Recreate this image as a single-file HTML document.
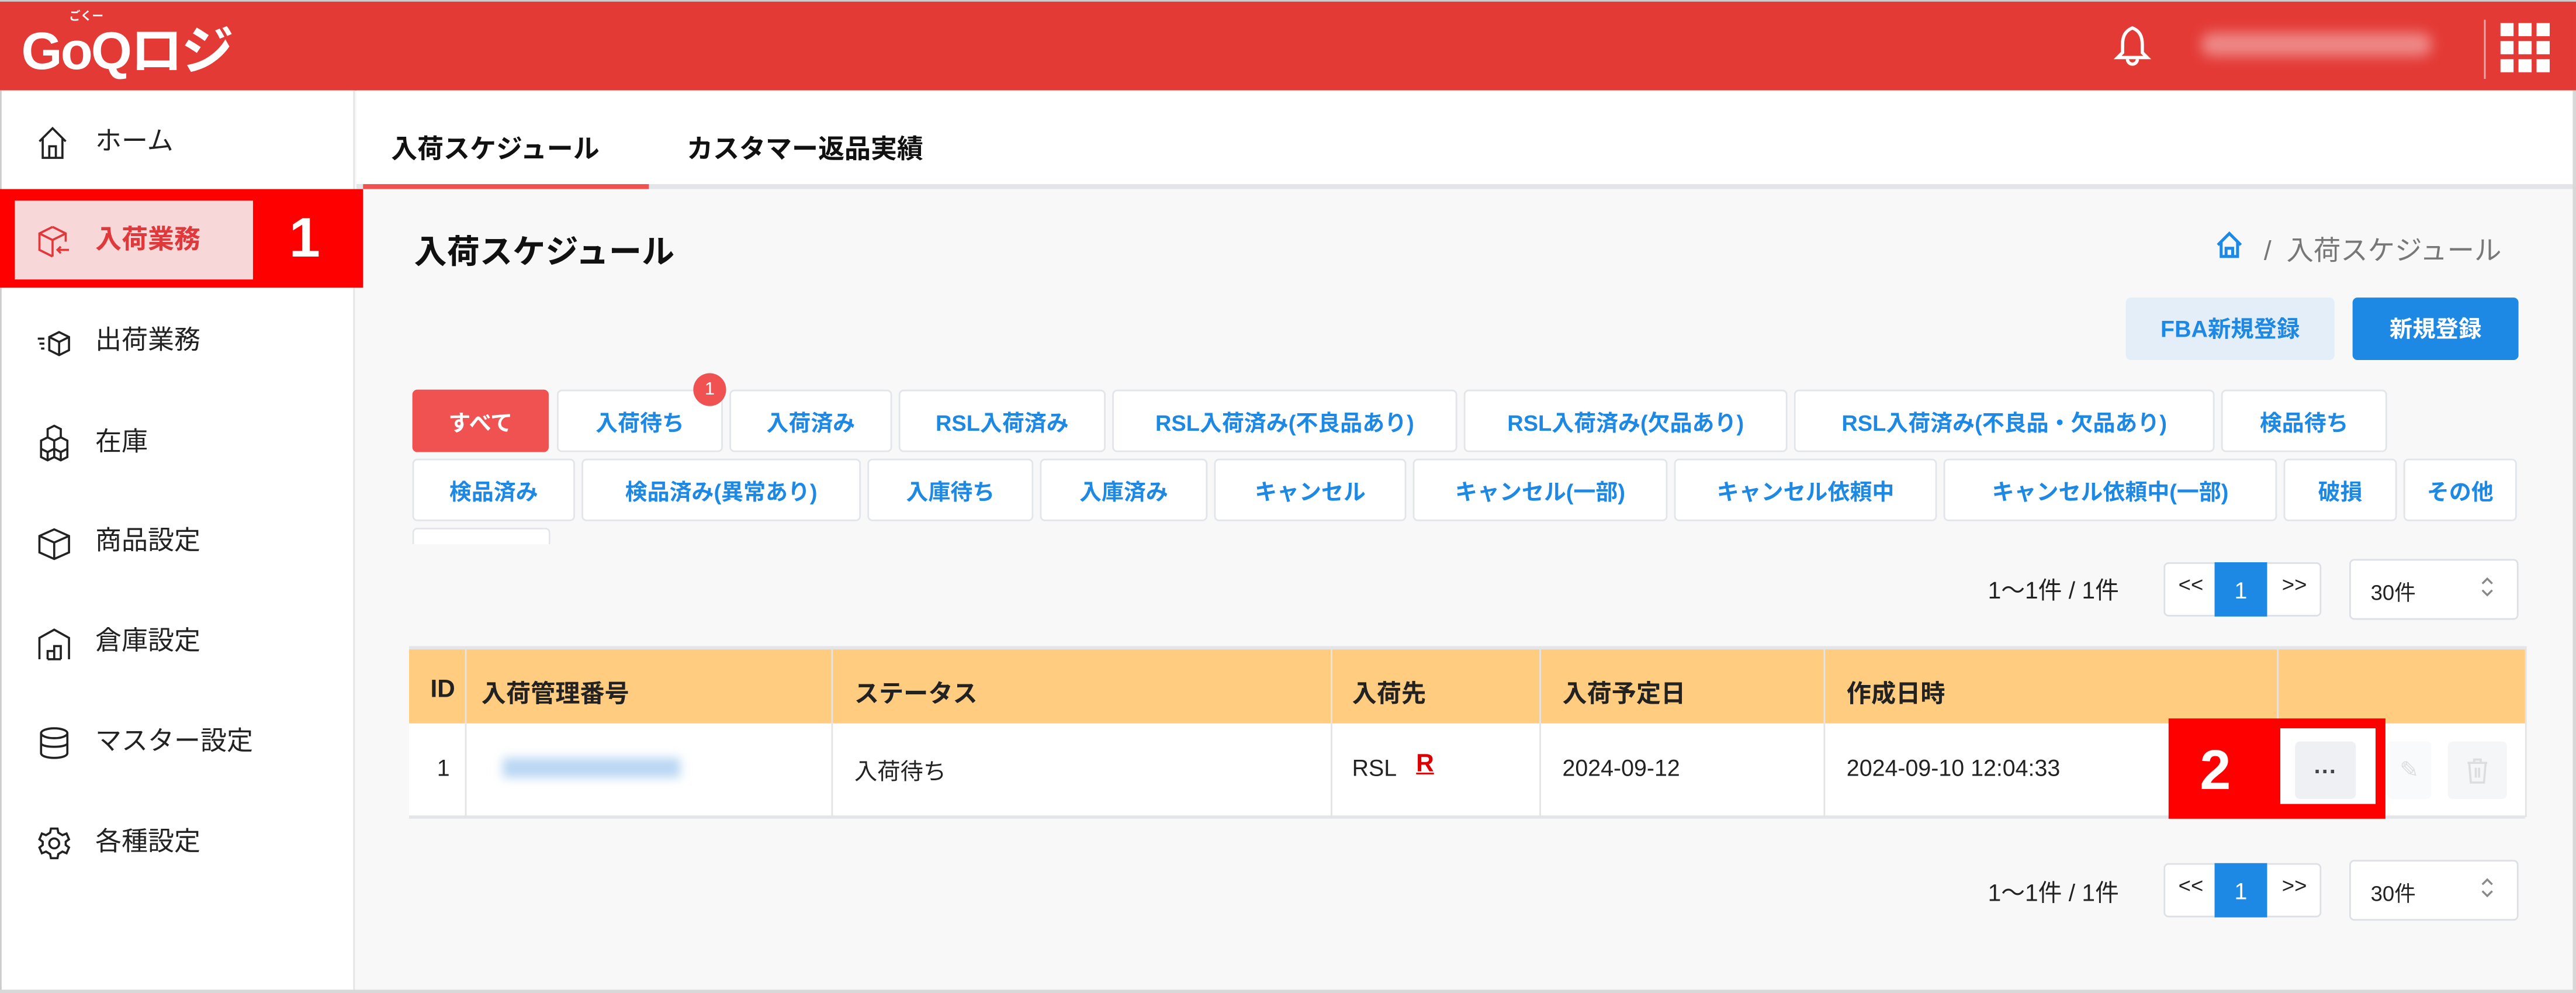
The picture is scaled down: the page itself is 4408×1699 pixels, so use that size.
<!DOCTYPE html>
<html><head><meta charset="utf-8">
<style>
html,body{margin:0;padding:0;width:4408px;height:1699px;overflow:hidden;background:#fff}
#s{position:absolute;left:0;top:0;width:1568px;height:604px;transform:scale(2.81122,2.81291);transform-origin:0 0;font-family:"Liberation Sans","Noto Sans CJK JP",sans-serif;background:#f8f8f8;overflow:hidden}
.a{position:absolute}
.c{position:absolute;display:flex;align-items:center;justify-content:center;box-sizing:border-box}
.ft{background:#fff;border:1px solid #e2e5ea;border-radius:3px;color:#1e88e5;font-size:13.5px;font-weight:bold;height:38px}
.nav{position:absolute;left:58px;font-size:16px;color:#222;line-height:20px}
.ic{position:absolute;left:22px}
.th{position:absolute;top:411px;font-size:15px;font-weight:bold;color:#222}
.td{position:absolute;top:459px;font-size:14px;color:#222}
.vl{position:absolute;width:1px;background:#e4e4e4;top:393px;height:104px}
</style></head><body>
<div id="s">
<!-- header -->
<div class="a" style="left:0;top:0;width:1568px;height:55px;background:#e43a36;border-top:1px solid #ccc;box-sizing:border-box"></div>
<div class="a" style="left:13px;top:11px;color:#fff;font-weight:bold;font-size:32px;letter-spacing:-1px;line-height:40px">GoQロジ</div>
<div class="a" style="left:42px;top:5px;color:#fff;font-size:7px;font-weight:bold">ごくー</div>
<svg class="a" style="left:1286px;top:14px" width="24" height="28" viewBox="0 0 24 28"><path d="M12 3 C7 5 6 9 6 13 L6 18 L3 21 L21 21 L18 18 L18 13 C18 9 17 5 12 3Z" fill="none" stroke="#fff" stroke-width="2"/><path d="M9 22 a3 3 0 0 0 6 0" fill="none" stroke="#fff" stroke-width="2"/></svg>
<div class="a" style="left:1340px;top:20px;width:140px;height:14px;background:#ee8a88;filter:blur(4px);border-radius:6px"></div>
<div class="a" style="left:1512px;top:12px;width:1px;height:36px;background:#f2aaa8"></div>
<svg class="a" style="left:1522px;top:14px" width="30" height="30" viewBox="0 0 30 30" fill="#fff"><rect x="0" y="0" width="8" height="8"/><rect x="11" y="0" width="8" height="8"/><rect x="22" y="0" width="8" height="8"/><rect x="0" y="11" width="8" height="8"/><rect x="11" y="11" width="8" height="8"/><rect x="22" y="11" width="8" height="8"/><rect x="0" y="22" width="8" height="8"/><rect x="11" y="22" width="8" height="8"/><rect x="22" y="22" width="8" height="8"/></svg>
<!-- sidebar -->
<div class="a" style="left:0;top:55px;width:216px;height:549px;background:#fff;border-right:1px solid #e4e4e4;border-left:1px solid #ccc;box-sizing:border-box"></div>
<svg class="ic" style="top:76px" width="20" height="22" viewBox="0 0 20 22" fill="none" stroke="#222" stroke-width="1.3"><path d="M2 10 L10 2 L18 10 M4 8 V20 H16 V8 M8 20 V13 H12 V20"/></svg>
<div class="nav" style="top:77px">ホーム</div>
<div class="a" style="left:0;top:115px;width:221px;height:60px;background:#ff0000"></div>
<div class="a" style="left:9px;top:122px;width:145px;height:48px;background:#f8d7d8"></div>
<svg class="ic" style="top:136px" width="22" height="22" viewBox="0 0 22 22" fill="none" stroke="#e0393c" stroke-width="1.3"><path d="M10 2 L18 6 V11 M10 2 L2 6 V16 L10 20 M2 6 L10 10 L18 6 M10 10 V20 M20 16 H13 M15 14 L13 16 L15 18"/></svg>
<div class="nav" style="top:137px;color:#e0393c;font-weight:bold">入荷業務</div>
<div class="a" style="left:176px;top:122px;color:#fff;font-size:34px;font-weight:bold;line-height:46px">1</div>
<svg class="ic" style="top:199px" width="22" height="20" viewBox="0 0 22 20" fill="none" stroke="#222" stroke-width="1.3"><path d="M1 7 H5 M2 10 H5 M3 13 H5 M14 3 L20 6 V14 L14 17 L8 14 V6 Z M8 6 L14 9 L20 6 M14 9 V17"/></svg>
<div class="nav" style="top:198px">出荷業務</div>
<svg class="ic" style="top:258px" width="22" height="24" viewBox="0 0 22 24" fill="none" stroke="#222" stroke-width="1.3"><path d="M11 1 L15 3 V8 L11 10 L7 8 V3 Z M7 8 L3 10 V15 L7 17 L11 15 V10 M15 8 L19 10 V15 L15 17 L11 15 M3 15 V20 L7 22 L11 20 L15 22 L19 20 V15 M7 17 V22 M15 17 V22 M11 15 V20"/></svg>
<div class="nav" style="top:260px">在庫</div>
<svg class="ic" style="top:320px" width="22" height="22" viewBox="0 0 22 22" fill="none" stroke="#222" stroke-width="1.3"><path d="M11 2 L20 6 V16 L11 20 L2 16 V6 Z M2 6 L11 10 L20 6 M11 10 V20"/></svg>
<div class="nav" style="top:320px">商品設定</div>
<svg class="ic" style="top:381px" width="22" height="22" viewBox="0 0 22 22" fill="none" stroke="#222" stroke-width="1.3"><path d="M2 20 V7 L11 2 L20 7 V20 M7 20 V15 H11 V20 M11 20 V12 H15 V20 M7 20 H15"/></svg>
<div class="nav" style="top:381px">倉庫設定</div>
<svg class="ic" style="top:441px" width="22" height="22" viewBox="0 0 22 22" fill="none" stroke="#222" stroke-width="1.3"><ellipse cx="11" cy="5" rx="8" ry="3"/><path d="M3 5 V17 C3 21 19 21 19 17 V5 M3 11 C3 14 19 14 19 11"/></svg>
<div class="nav" style="top:442px">マスター設定</div>
<svg class="ic" style="top:502px" width="22" height="22" viewBox="0 0 22 22" fill="none" stroke="#222" stroke-width="1.3"><circle cx="11" cy="11" r="3"/><path d="M9 2 H13 L13.5 4.5 L16 6 L18.5 5 L20 8.5 L18 10 V12 L20 13.5 L18.5 17 L16 16 L13.5 17.5 L13 20 H9 L8.5 17.5 L6 16 L3.5 17 L2 13.5 L4 12 V10 L2 8.5 L3.5 5 L6 6 L8.5 4.5 Z"/></svg>
<div class="nav" style="top:503px">各種設定</div>
<!-- tabs bar -->
<div class="a" style="left:217px;top:55px;width:1351px;height:60px;background:#fff;border-bottom:3px solid #e3e5e9;box-sizing:border-box"></div>
<div class="a" style="left:221px;top:112px;width:174px;height:3px;background:#f05252"></div>
<div class="a" style="left:238px;top:77px;font-size:16px;font-weight:bold;color:#111">入荷スケジュール</div>
<div class="a" style="left:418px;top:77px;font-size:16px;font-weight:bold;color:#111">カスタマー返品実績</div>
<div class="a" style="left:1566px;top:55px;width:2px;height:549px;background:#d8d8d8"></div>
<!-- title -->
<div class="a" style="left:252px;top:137px;font-size:20px;font-weight:bold;color:#111">入荷スケジュール</div>
<svg class="a" style="left:1348px;top:140px" width="18" height="18" viewBox="0 0 18 18" fill="none" stroke="#1e88e5" stroke-width="1.8"><path d="M2 9 L9 2 L16 9 M4 7 V16 H14 V7 M7 16 V11 H11 V16"/></svg>
<div class="a" style="left:1378px;top:139px;font-size:16.5px;color:#777">/&nbsp; 入荷スケジュール</div>
<div class="c" style="left:1294px;top:181px;width:127px;height:38px;background:#e3eef9;border-radius:3px;color:#1e88e5;font-size:14px;font-weight:bold">FBA新規登録</div>
<div class="c" style="left:1432px;top:181px;width:101px;height:38px;background:#1e88e5;border-radius:3px;color:#fff;font-size:14px;font-weight:bold">新規登録</div>
<!-- filter tabs -->
<div class="c ft" style="left:251px;top:237px;width:83px;background:#f05252;border-color:#f05252;color:#fff">すべて</div>
<div class="c ft" style="left:339px;top:237px;width:101px">入荷待ち</div>
<div class="c" style="left:422px;top:227px;width:20px;height:20px;border-radius:10px;background:#f05252;color:#fff;font-size:11px">1</div>
<div class="c ft" style="left:444px;top:237px;width:99px">入荷済み</div>
<div class="c ft" style="left:547px;top:237px;width:126px">RSL入荷済み</div>
<div class="c ft" style="left:677px;top:237px;width:210px">RSL入荷済み(不良品あり)</div>
<div class="c ft" style="left:891px;top:237px;width:197px">RSL入荷済み(欠品あり)</div>
<div class="c ft" style="left:1092px;top:237px;width:256px">RSL入荷済み(不良品・欠品あり)</div>
<div class="c ft" style="left:1352px;top:237px;width:101px">検品待ち</div>
<div class="c ft" style="left:251px;top:279px;width:99px">検品済み</div>
<div class="c ft" style="left:354px;top:279px;width:170px">検品済み(異常あり)</div>
<div class="c ft" style="left:528px;top:279px;width:101px">入庫待ち</div>
<div class="c ft" style="left:633px;top:279px;width:102px">入庫済み</div>
<div class="c ft" style="left:739px;top:279px;width:117px">キャンセル</div>
<div class="c ft" style="left:860px;top:279px;width:155px">キャンセル(一部)</div>
<div class="c ft" style="left:1019px;top:279px;width:160px">キャンセル依頼中</div>
<div class="c ft" style="left:1183px;top:279px;width:203px">キャンセル依頼中(一部)</div>
<div class="c ft" style="left:1390px;top:279px;width:69px">破損</div>
<div class="c ft" style="left:1463px;top:279px;width:69px">その他</div>
<div class="a" style="left:251px;top:321px;width:84px;height:10px;background:#fff;border:1px solid #e2e5ea;border-bottom:none;border-radius:3px 3px 0 0;box-sizing:border-box"></div>
<!-- pagination top -->
<div class="a" style="left:1210px;top:348px;font-size:14.5px;color:#222">1〜1件 / 1件</div>
<div class="a" style="left:1317px;top:342px;width:96px;height:33px;background:#fff;border:1px solid #dde0e5;border-radius:3px;box-sizing:border-box"></div>
<div class="a" style="left:1326px;top:348px;font-size:13px;color:#222">&lt;&lt;</div>
<div class="c" style="left:1348px;top:342px;width:32px;height:33px;background:#1e88e5;color:#fff;font-size:14px">1</div>
<div class="a" style="left:1389px;top:348px;font-size:13px;color:#222">&gt;&gt;</div>
<div class="a" style="left:1430px;top:340px;width:103px;height:37px;background:#fff;border:1px solid #dde0e5;border-radius:3px;box-sizing:border-box"></div>
<div class="a" style="left:1443px;top:350px;font-size:13px;color:#222">30件</div>
<svg class="a" style="left:1510px;top:350px" width="8" height="14" viewBox="0 0 8 14" fill="none" stroke="#888" stroke-width="1.2"><path d="M1 5 L4 2 L7 5 M1 9 L4 12 L7 9"/></svg>
<!-- table -->
<div class="a" style="left:249px;top:393px;width:1288px;height:105px;background:#fff;border-top:2px solid #e3e5e9;border-bottom:2px solid #e3e5e9;box-sizing:border-box"></div>
<div class="a" style="left:249px;top:395px;width:1288px;height:45px;background:#ffcc80"></div>
<div class="vl" style="left:283px"></div><div class="vl" style="left:506px"></div><div class="vl" style="left:810px"></div><div class="vl" style="left:937px"></div><div class="vl" style="left:1110px"></div><div class="vl" style="left:1386px"></div><div class="vl" style="left:1537px"></div>
<div class="th" style="left:262px">ID</div>
<div class="th" style="left:293px">入荷管理番号</div>
<div class="th" style="left:520px">ステータス</div>
<div class="th" style="left:823px">入荷先</div>
<div class="th" style="left:951px">入荷予定日</div>
<div class="th" style="left:1124px">作成日時</div>
<div class="td" style="left:266px">1</div>
<div class="a" style="left:306px;top:461px;width:108px;height:12px;background:#b9d6f3;filter:blur(3px)"></div>
<div class="td" style="left:520px">入荷待ち</div>
<div class="td" style="left:823px">RSL</div>
<div class="a" style="left:862px;top:456px;font-size:15px;color:#d00;font-weight:bold;text-decoration:underline">R</div>
<div class="td" style="left:951px">2024-09-12</div>
<div class="td" style="left:1124px">2024-09-10 12:04:33</div>
<div class="a" style="left:1320px;top:437px;width:132px;height:61px;background:#ff0000"></div>
<div class="a" style="left:1339px;top:446px;color:#fff;font-size:34px;font-weight:bold;line-height:46px">2</div>
<div class="a" style="left:1388px;top:443px;width:58px;height:46px;background:#fff"></div>
<div class="c" style="left:1397px;top:451px;width:37px;height:35px;background:#eef0f3;border-radius:3px;font-size:14px;color:#444;font-weight:bold">···</div>
<div class="c" style="left:1453px;top:451px;width:27px;height:35px;background:#f9fafb;border-radius:3px;color:#ddd;font-size:14px">✎</div>
<div class="c" style="left:1490px;top:451px;width:36px;height:35px;background:#f5f6f8;border-radius:3px"><svg width="14" height="16" viewBox="0 0 14 16" fill="none" stroke="#ddd" stroke-width="1.3"><path d="M1 3 H13 M5 3 V1 H9 V3 M2 3 L3 15 H11 L12 3 M6 6 V12 M8 6 V12"/></svg></div>
<!-- pagination bottom -->
<div class="a" style="left:1210px;top:532px;font-size:14.5px;color:#222">1〜1件 / 1件</div>
<div class="a" style="left:1317px;top:525px;width:96px;height:33px;background:#fff;border:1px solid #dde0e5;border-radius:3px;box-sizing:border-box"></div>
<div class="a" style="left:1326px;top:531px;font-size:13px;color:#222">&lt;&lt;</div>
<div class="c" style="left:1348px;top:525px;width:32px;height:33px;background:#1e88e5;color:#fff;font-size:14px">1</div>
<div class="a" style="left:1389px;top:531px;font-size:13px;color:#222">&gt;&gt;</div>
<div class="a" style="left:1430px;top:523px;width:103px;height:37px;background:#fff;border:1px solid #dde0e5;border-radius:3px;box-sizing:border-box"></div>
<div class="a" style="left:1443px;top:533px;font-size:13px;color:#222">30件</div>
<svg class="a" style="left:1510px;top:533px" width="8" height="14" viewBox="0 0 8 14" fill="none" stroke="#888" stroke-width="1.2"><path d="M1 5 L4 2 L7 5 M1 9 L4 12 L7 9"/></svg>
<div class="a" style="left:0;top:602px;width:1568px;height:2px;background:#d8d8d8"></div>
</div>
</body></html>
